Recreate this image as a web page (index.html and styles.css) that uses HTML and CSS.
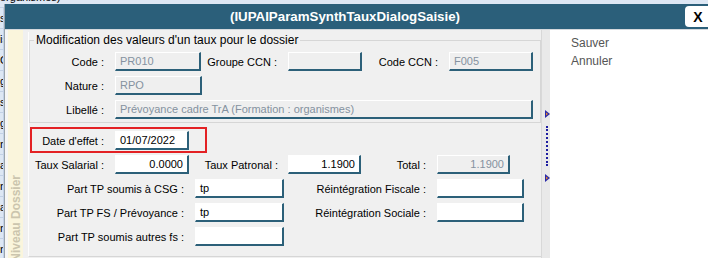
FILE: index.html
```html
<!DOCTYPE html>
<html lang="fr">
<head>
    <meta charset="UTF-8">
    <title>IUPAIParamSynthTauxDialogSaisie</title>
    <link rel="stylesheet" href="styles.css">
</head>
<body>
    <div class="app">
        <div class="app-row first">organismes)</div>
        <div class="app-row">s</div>
        <div class="app-row">is</div>
        <div class="app-row">Gr</div>
        <div class="app-row">g</div>
        <div class="app-row">s</div>
        <div class="app-row">g</div>
        <div class="app-row">n</div>
        <div class="app-row">ai</div>
        <div class="app-row">n</div>
        <div class="app-row">ai</div>
        <div class="app-row">n</div>
        <div class="app-row">n</div>
    </div>

    <div class="dialog">
        <div class="titlebar">
            <span class="title">(IUPAIParamSynthTauxDialogSaisie)</span>
            <button class="close">X</button>
        </div>
        <div class="dialog-body">
            <div class="edge"></div>
            <div class="side-tab"><span>Niveau Dossier</span></div>
            <div class="content">
                <div class="frame">
                    <fieldset class="group">
                        <legend>Modification des valeurs d'un taux pour le dossier</legend>
                        <div class="row row-code">
                            <label class="lbl">Code :</label>
                            <div class="field off">PR010</div>
                            <label class="lbl">Groupe CCN :</label>
                            <div class="field off"></div>
                            <label class="lbl">Code CCN :</label>
                            <div class="field off">F005</div>
                        </div>
                        <div class="row row-nature">
                            <label class="lbl">Nature :</label>
                            <div class="field off">RPO</div>
                        </div>
                        <div class="row row-libelle">
                            <label class="lbl">Libellé :</label>
                            <div class="field off">Prévoyance cadre TrA (Formation : organismes)</div>
                        </div>
                    </fieldset>

                    <div class="highlight">
                        <div class="row row-date">
                            <label class="lbl">Date d'effet :</label>
                            <div class="field">01/07/2022</div>
                        </div>
                    </div>

                    <div class="rows">
                        <div class="row row-taux">
                            <label class="lbl">Taux Salarial :</label>
                            <div class="field num">0.0000</div>
                            <label class="lbl">Taux Patronal :</label>
                            <div class="field num">1.1900</div>
                            <label class="lbl">Total :</label>
                            <div class="field off num">1.1900</div>
                        </div>
                        <div class="row row-part">
                            <label class="lbl">Part TP soumis à CSG :</label>
                            <div class="field">tp</div>
                            <label class="lbl">Réintégration Fiscale :</label>
                            <div class="field"></div>
                        </div>
                        <div class="row row-part">
                            <label class="lbl">Part TP FS / Prévoyance :</label>
                            <div class="field">tp</div>
                            <label class="lbl">Réintégration Sociale :</label>
                            <div class="field"></div>
                        </div>
                        <div class="row row-part">
                            <label class="lbl">Part TP soumis autres fs :</label>
                            <div class="field"></div>
                        </div>
                    </div>
                </div>
            </div>
            <div class="splitter">
                <svg class="arrow arrow-top" width="5" height="8" viewBox="0 0 5 8"><path d="M0 0 L5 4 L0 8 Z" fill="#2a2aa8"/><path d="M1 2.5 L3 4 L1 5.5 Z" fill="#e8862a"/></svg>
                <div class="dots"></div>
                <svg class="arrow" width="5" height="8" viewBox="0 0 5 8"><path d="M0 0 L5 4 L0 8 Z" fill="#2a2aa8"/><path d="M1 2.5 L3 4 L1 5.5 Z" fill="#e8862a"/></svg>
            </div>
            <div class="actions">
                <div class="action">Sauver</div>
                <div class="action">Annuler</div>
            </div>
        </div>
    </div>
</body>
</html>
```

FILE: styles.css
```css
body {
    margin: 0;
    font-family: "Liberation Sans", Arial, sans-serif;
    font-size: 11px;
    color: #000;
    background-color: #dde7f4;
    overflow: hidden;
    height: 258px;
}
.app-row {
    height: 20px;
    line-height: 20px;
    border-bottom: 1px solid #c3d1e6;
    border-right: 1px solid #c3d1e6;
    width: 3px;
    overflow: hidden;
    white-space: nowrap;
}
.app-row.first {
    width: 100px;
    margin-top: -13px;
    border-right: none;
}

.dialog {
    position: absolute;
    left: 4px;
    top: 4px;
    width: 710px;
    height: 270px;
    border-left: 1px solid #9aa4ac;
    background-color: #f0f0f0;
    display: flex;
    flex-direction: column;
}
.titlebar {
    height: 25px;
    background-color: #2b5f7a;
    display: flex;
    align-items: center;
    border-bottom: 1px solid #d4d8dc;
}
.title {
    flex: 1;
    text-align: center;
    color: #fff;
    font-weight: bold;
    font-size: 13.3px;
}
.close {
    width: 30px;
    height: 21px;
    margin: 0;
    padding: 0 4px 0 0;
    border: none;
    border-radius: 4px 0 0 4px;
    background-color: #fff;
    font-family: "Liberation Sans", Arial, sans-serif;
    font-weight: bold;
    font-size: 14px;
    color: #000;
}

.dialog-body {
    flex: 1;
    display: flex;
}
.edge {
    width: 3px;
    background-color: #f6f6f6;
}
.side-tab {
    width: 15px;
    background-color: #faf5dc;
    display: flex;
    align-items: flex-end;
    justify-content: center;
    overflow: hidden;
}
.side-tab span {
    writing-mode: vertical-rl;
    transform: rotate(180deg);
    font-weight: bold;
    font-size: 12px;
    color: #cbc5ae;
    margin-bottom: 12px;
}
.content {
    width: 513px;
    padding: 2px 0 0 5px;
}
.frame {
    border-left: 1px solid #fdfdfd;
    border-bottom: 1px solid #d6d6d6;
    padding-bottom: 10px;
}

.group {
    margin: 0;
    padding: 4px 0 3px 0;
    border: 1px solid #d6d6d6;
    border-left-color: #dadada;
}
.group legend {
    margin-left: 4px;
    padding: 0 2px;
    line-height: 16px;
    font-size: 12px;
}

.row {
    display: grid;
    height: 19px;
    align-items: center;
    margin-bottom: 5px;
}
.row:last-child {
    margin-bottom: 0;
}
.lbl {
    text-align: right;
    padding-right: 11px;
    white-space: nowrap;
}
.row-code { grid-template-columns: 85px 86px 87px 74px 87px 84px; }
.row-nature { grid-template-columns: 85px 87px; }
.row-libelle { grid-template-columns: 85px 418px; }
.row-date { grid-template-columns: 83px 74px; margin: 0; }
.row-taux { grid-template-columns: 86px 74px 99px 73px 76px 73px; }
.row-taux .lbl:nth-child(3) { padding-right: 10px; }
.row-part { grid-template-columns: 166px 89px 153px 87px; }

.field {
    box-sizing: border-box;
    height: 19px;
    line-height: 16px;
    padding: 0 4px;
    background-color: #fff;
    border-top: 1px solid #fff;
    border-left: 1px solid #fff;
    border-right: 2px solid #2c6079;
    border-bottom: 2px solid #2c6079;
    white-space: nowrap;
    overflow: hidden;
}
.field.off {
    background-color: #efefef;
    color: #8592a0;
}
.field.num {
    text-align: right;
}

.highlight {
    margin: 4px 0 0 1px;
    width: 173px;
    padding: 2px 0 1px 0;
    border: 2px solid #e32124;
}
.rows {
    margin-top: 2px;
}

.splitter {
    width: 8px;
    border-left: 1px solid #d8d8d8;
    background-color: #e9e9e9;
    display: flex;
    flex-direction: column;
    align-items: flex-end;
}
.arrow {
    display: block;
}
.arrow-top {
    margin-top: 80px;
}
.dots {
    width: 0;
    height: 40px;
    margin: 8px 2px 8px 0;
    border-left: 2px dotted #1c1ca0;
}
.actions {
    flex: 1;
    background-color: #fff;
    padding: 4px 0 0 21px;
}
.action {
    line-height: 18px;
    font-size: 12px;
    color: #555;
}
```
